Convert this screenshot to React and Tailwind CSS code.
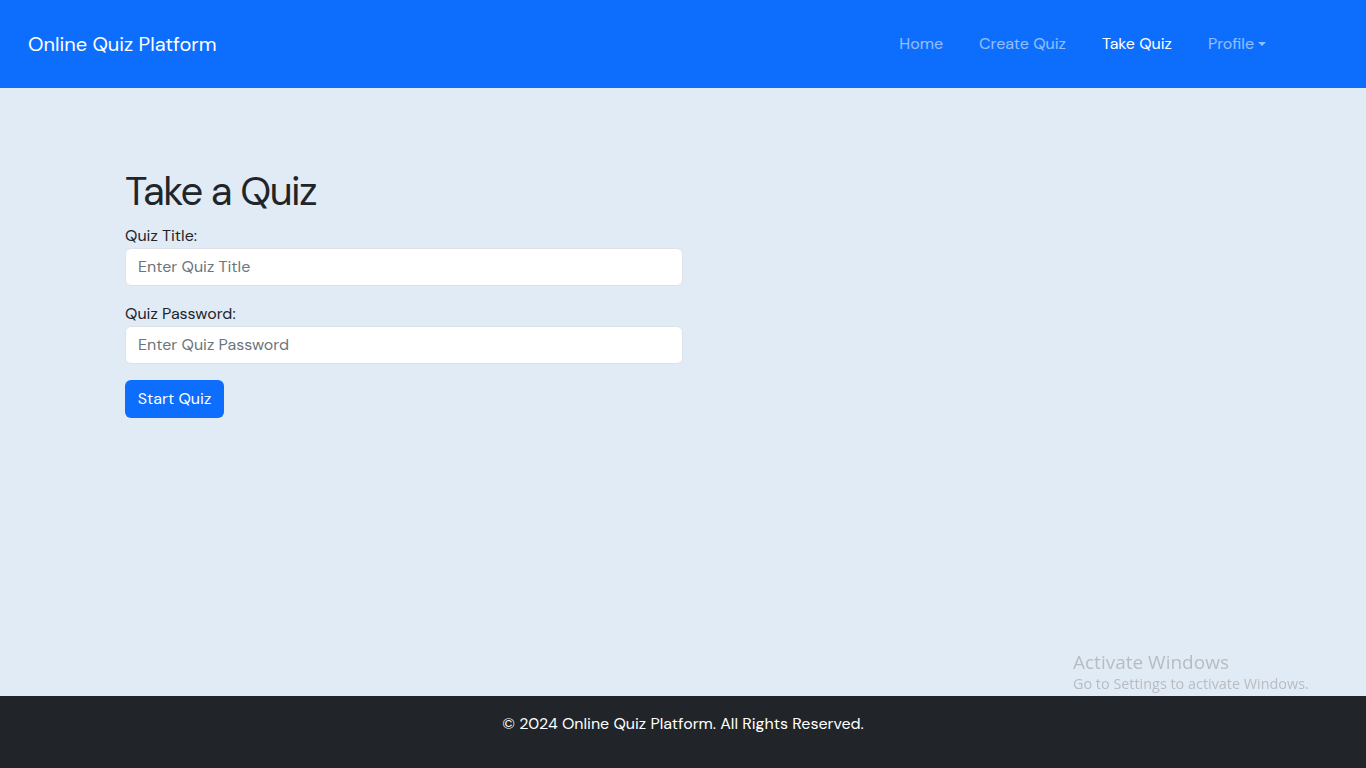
export default function App() {
  const font = { fontFamily: '"DM Sans", Inter, "Noto Sans", sans-serif' };
  return (
    <div className="min-h-screen flex flex-col bg-[#e1ebf6]" style={font}>
      <nav className="h-[88px] bg-[#0d6efd] flex items-center justify-between pl-[28px] pr-[100px]">
        <span className="text-white text-[20px] leading-none">Online Quiz Platform</span>
        <div className="flex items-center gap-[36px] text-[16px]">
          <span className="text-white/55">Home</span>
          <span className="text-white/55">Create Quiz</span>
          <span className="text-white">Take Quiz</span>
          <span className="text-white/55 flex items-center">
            Profile
            <span className="ml-[4px] inline-block w-0 h-0 border-l-[4px] border-r-[4px] border-t-[4px] border-l-transparent border-r-transparent border-t-white/55" />
          </span>
        </div>
      </nav>
      <main className="flex-1 pt-[79px] pl-[125px]">
        <div className="w-[558px]">
          <h1 className="text-[40px] leading-[48px] text-[#212529] tracking-[-1.5px] mb-[9px]">Take a Quiz</h1>
          <div className="mb-[16px]">
            <label className="block text-[16px] leading-[24px] text-[#212529]">Quiz Title:</label>
            <input
              className="block w-full h-[38px] bg-white border border-[#dee2e6] rounded-[6px] px-[12px] pb-[1px] text-[16px] text-[#212529] placeholder:text-[#6c757d] outline-none"
              placeholder="Enter Quiz Title"
              style={font}
            />
          </div>
          <div className="mb-[16px]">
            <label className="block text-[16px] leading-[24px] text-[#212529]">Quiz Password:</label>
            <input
              type="password"
              className="block w-full h-[38px] bg-white border border-[#dee2e6] rounded-[6px] px-[12px] pb-[1px] text-[16px] text-[#212529] placeholder:text-[#6c757d] outline-none"
              placeholder="Enter Quiz Password"
              style={font}
            />
          </div>
          <button className="h-[38px] w-[99px] bg-[#0d6efd] text-white text-[16px] rounded-[6px]" style={font}>
            Start Quiz
          </button>
        </div>
      </main>
      <footer className="h-[72px] bg-[#212529] flex justify-center pt-[16px]">
        <span className="text-white text-[16px] leading-[24px]">© 2024 Online Quiz Platform. All Rights Reserved.</span>
      </footer>
      <div className="fixed left-[1073px] top-[650px] pointer-events-none" style={{ fontFamily: '"Open Sans", "Noto Sans", sans-serif' }}>
        <div className="text-[19px] leading-[24px] text-[#b8bcc1]">Activate Windows</div>
        <div className="text-[14.4px] leading-[20px] text-[#b8bcc1]">Go to Settings to activate Windows.</div>
      </div>
    </div>
  );
}
